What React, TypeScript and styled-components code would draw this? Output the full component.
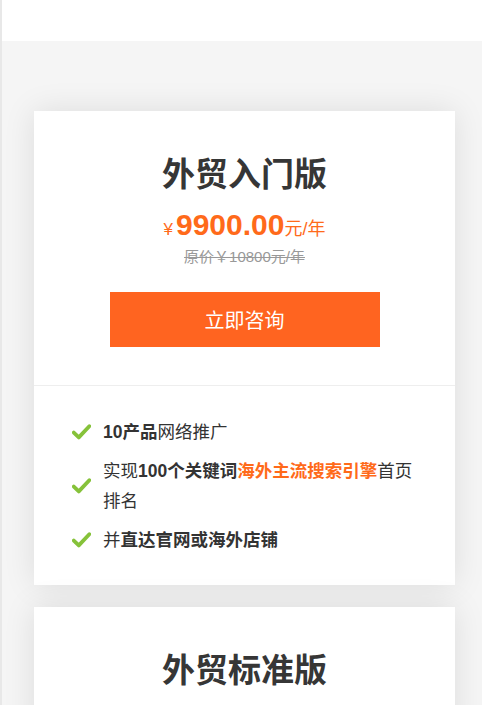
import React from 'react'
import styled, { createGlobalStyle } from 'styled-components'

const GlobalStyle = createGlobalStyle`
  html, body {
    margin: 0;
    padding: 0;
    background: #fff;
  }
  body {
    font-family: "Liberation Sans", "Noto Sans CJK SC", sans-serif;
    color: #333;
  }
`

const Page = styled.div`
  border-left: 2px solid #e8e8e8;
  min-height: 705px;
  box-sizing: border-box;
`

const TopBar = styled.div`
  height: 41px;
  background: #fff;
`

const Section = styled.div`
  background: #f5f5f5;
  padding: 70px 27px 40px 32px;
  display: flex;
  flex-direction: column;
  gap: 22px;
`

const Card = styled.div`
  background: #fff;
  box-shadow: 0 0 30px rgba(0, 0, 0, 0.1);
`

const CardHead = styled.div`
  display: flex;
  flex-direction: column;
  align-items: center;
  padding: 42px 0 38px;
  border-bottom: 1px solid #eee;
`

const Title = styled.h2`
  margin: 0;
  font-size: 33px;
  line-height: 44px;
  font-weight: 700;
  color: #363636;
`

const Price = styled.div`
  margin-top: 10px;
  color: #ff6a1a;
  display: flex;
  align-items: baseline;
  line-height: 36px;
`

const Yen = styled.span`
  font-size: 17px;
  margin-right: 3px;
`

const Amount = styled.span`
  font-size: 30px;
  font-weight: 700;
`

const Unit = styled.span`
  font-size: 18px;
`

const OldPrice = styled.div`
  font-size: 15px;
  line-height: 18px;
  color: #999;
  text-decoration: line-through;
`

const Button = styled.button`
  margin-top: 26px;
  width: 270px;
  height: 55px;
  border: none;
  background: #ff6420;
  color: #fff;
  font-family: inherit;
  font-size: 20px;
  cursor: pointer;
`

const List = styled.ul`
  list-style: none;
  margin: 0;
  padding: 31px 38px 30px 38px;
  display: flex;
  flex-direction: column;
  gap: 9px;
`

const Item = styled.li`
  display: flex;
  align-items: center;
  gap: 12px;
  font-size: 17.5px;
  line-height: 30px;
  color: #333;
`

const Bold = styled.b<{ $accent?: boolean }>`
  font-weight: 700;
  color: ${p => (p.$accent ? '#ff6a1a' : '#333')};
`

const Check = () => (
  <svg width="19" height="16" viewBox="0 0 19 16" style={{ flexShrink: 0 }}>
    <path d="M1.8 8.6 L6.8 13.4 L17.3 2.2" fill="none" stroke="#86c23a" strokeWidth="3.8" strokeLinecap="round" strokeLinejoin="round" />
  </svg>
)

export default function App() {
  return (
    <>
      <GlobalStyle />
      <Page>
        <TopBar />
        <Section>
          <Card>
            <CardHead>
              <Title>外贸入门版</Title>
              <Price>
                <Yen>¥</Yen>
                <Amount>9900.00</Amount>
                <Unit>元/年</Unit>
              </Price>
              <OldPrice>原价￥10800元/年</OldPrice>
              <Button>立即咨询</Button>
            </CardHead>
            <List>
              <Item>
                <Check />
                <span><Bold>10产品</Bold>网络推广</span>
              </Item>
              <Item>
                <Check />
                <span>实现<Bold>100个关键词</Bold><Bold $accent>海外主流搜索引擎</Bold>首页排名</span>
              </Item>
              <Item>
                <Check />
                <span>并<Bold>直达官网或海外店铺</Bold></span>
              </Item>
            </List>
          </Card>
          <Card>
            <CardHead>
              <Title>外贸标准版</Title>
            </CardHead>
          </Card>
        </Section>
      </Page>
    </>
  )
}
